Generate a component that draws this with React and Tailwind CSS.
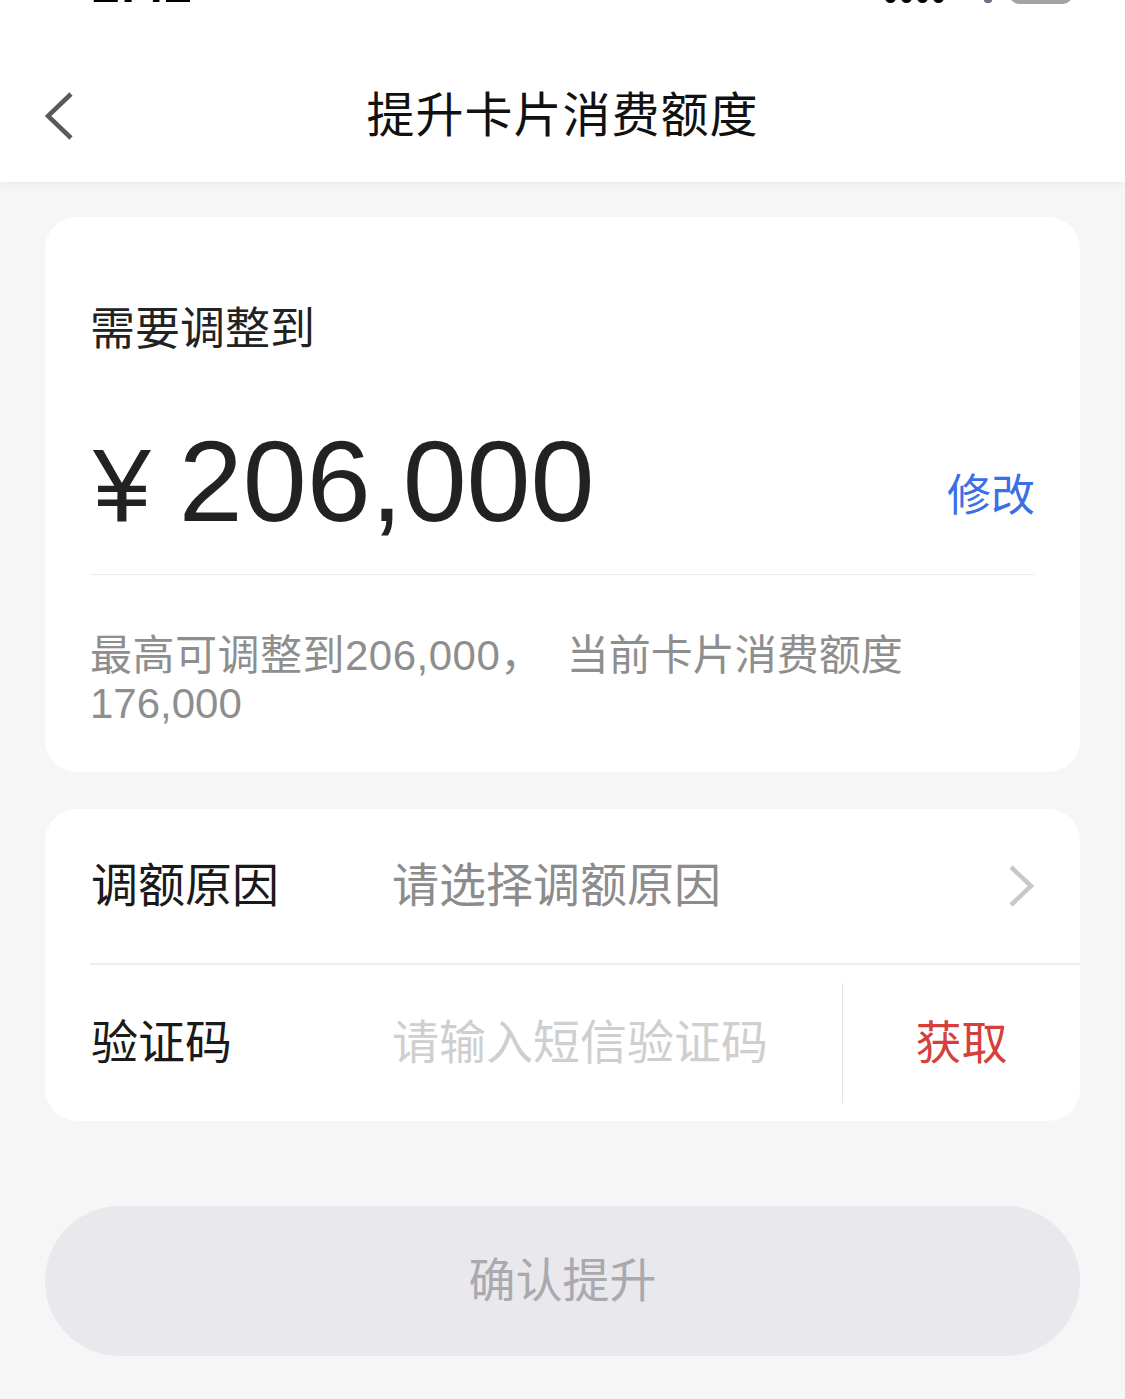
import React from "react";

const CJK = '"Liberation Sans", "Noto Sans CJK SC", sans-serif';

function StatusBar() {
  return (
    <div className="h-[50px] bg-white overflow-hidden flex justify-between items-start pl-[92px] pr-[53px]">
      <div className="-mt-[40px] text-[50px] leading-[50px] font-semibold text-black" style={{ fontFamily: CJK }}>
        2:42
      </div>
      <div className="flex items-start gap-[40px]">
        <div className="flex gap-[5px] -mt-[10px]">
          <div className="w-[11px] h-[13px] rounded-full bg-black" />
          <div className="w-[11px] h-[13px] rounded-full bg-black" />
          <div className="w-[11px] h-[13px] rounded-full bg-black" />
          <div className="w-[11px] h-[13px] rounded-full bg-black" />
        </div>
        <div className="flex items-start gap-[18px]">
          <div className="w-[8px] h-[3px] bg-gray-500 rounded-b-full" />
          <div className="w-[62px] h-[30px] -mt-[26px] rounded-[9px] bg-[#a3a3a3]" />
        </div>
      </div>
    </div>
  );
}

function NavBar() {
  return (
    <div className="relative z-10 bg-white shadow-[0_2px_10px_rgba(0,0,0,0.06)]">
      <StatusBar />
      <div className="h-[132px] flex items-center justify-center relative">
        <svg
          className="absolute left-[44px] top-[42px]"
          width="30"
          height="48"
          viewBox="0 0 30 48"
          fill="none"
        >
          <polyline points="27,2 4,24 27,46" stroke="#5a5a5a" strokeWidth="4.5" strokeLinecap="butt" strokeLinejoin="miter" />
        </svg>
        <div className="text-[48px] leading-[60px] text-[#111] tracking-[1px]" style={{ fontFamily: CJK }}>
          提升卡片消费额度
        </div>
      </div>
    </div>
  );
}

export default function App() {
  return (
    <div className="w-[1125px] h-[1399px] bg-[#f6f6f6] overflow-hidden" style={{ fontFamily: CJK }}>
      <NavBar />
      <div className="px-[45px] pt-[35px] flex flex-col">
        {/* Card 1 */}
        <div className="bg-white rounded-[32px] pt-[83px] pb-[44px] px-[45px]">
          <div className="text-[45px] leading-[60px] text-[#222]">需要调整到</div>
          <div className="mt-[65px] flex justify-between">
            <div className="flex items-baseline text-[#222]">
              <span className="text-[104px] leading-none mr-[28px] ml-[3px]" style={{ fontFamily: '"Liberation Sans", sans-serif' }}>¥</span>
              <span className="text-[115px] leading-[112px]" style={{ fontFamily: '"Liberation Sans", sans-serif' }}>206,000</span>
            </div>
            <div className="self-end mb-[11px] text-[44px] leading-[60px] text-[#3b6fe6]">修改</div>
          </div>
          <div className="mt-[37px] h-px bg-[#ececec]" />
          <div className="mt-[57px] text-[42px] leading-[48px] text-[#8e8e8e]">
            <span className="tracking-[0.5px]">最高可调整到206,000，</span>
            <span className="ml-[24px]">当前卡片消费额度</span>
            <br />
            176,000
          </div>
        </div>

        {/* Card 2 */}
        <div className="mt-[37px] bg-white rounded-[32px]">
          <div className="h-[154px] flex items-center pl-[46px] pr-[45px]">
            <div className="w-[301px] text-[47px] leading-[60px] text-[#1a1a1a]">调额原因</div>
            <div className="flex-1 text-[47px] leading-[60px] text-[#8c8c8c]">请选择调额原因</div>
            <svg width="28" height="44" viewBox="0 0 28 44" fill="none">
              <polyline points="4,3 24,22 4,41" stroke="#c8c8cc" strokeWidth="4.5" />
            </svg>
          </div>
          <div className="ml-[45px] h-[2px] bg-[#ececec]" />
          <div className="h-[156px] flex items-center pl-[46px]">
            <div className="w-[301px] text-[47px] leading-[60px] text-[#1a1a1a]">验证码</div>
            <div className="w-[450px] text-[47px] leading-[60px] text-[#cfcfcf]">请输入短信验证码</div>
            <div className="w-px h-[120px] bg-[#e3e3e3]" />
            <div className="flex-1 flex justify-center text-[46px] leading-[60px] text-[#d5403a]">获取</div>
          </div>
        </div>

        {/* Button */}
        <div className="mt-[85px] h-[150px] rounded-full bg-[#e8e8ed] flex items-center justify-center">
          <span className="text-[47px] leading-[60px] text-[#a9a9ae]">确认提升</span>
        </div>
      </div>
    </div>
  );
}
